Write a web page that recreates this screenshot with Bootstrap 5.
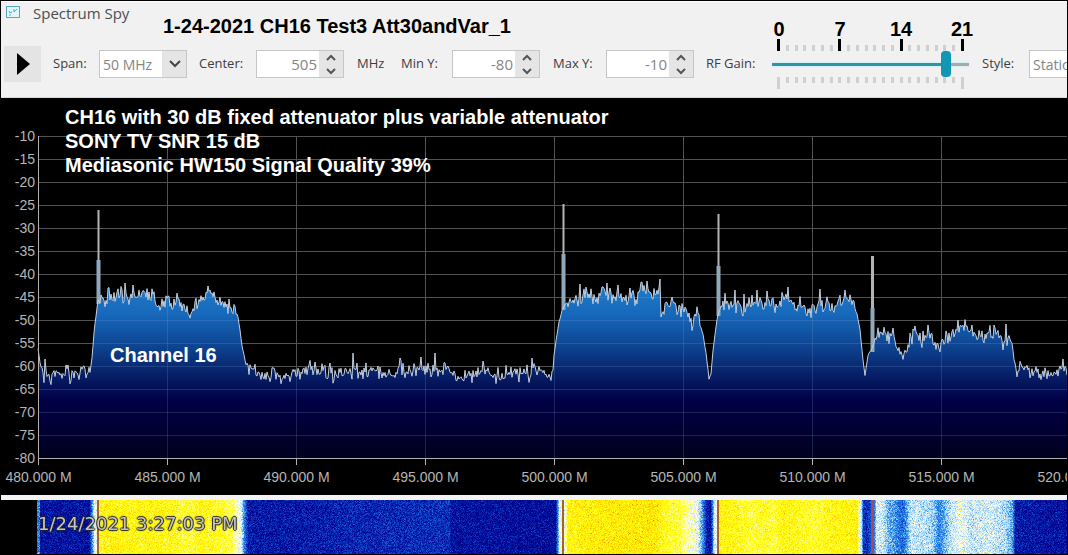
<!DOCTYPE html>
<html lang="en">
<head>
<meta charset="utf-8">
<meta name="viewport" content="width=device-width, initial-scale=1">
<title>Spectrum Spy</title>
<link href="https://cdn.jsdelivr.net/npm/bootstrap@5.3.0/dist/css/bootstrap.min.css" rel="stylesheet">
<style>
  body { font-family: "Open Sans", "Noto Sans", sans-serif; background: #000; }
  .spy-window { border: 1px solid #000; }
  .spy-head { background: #f1f1f1; border-top: 1px solid #fff; border-bottom: 1px solid #d5d9d9; color: #3c3c44; height: 97px; }
  .title-row { height: 36px; }
  .app-name { font-size: 15px; line-height: 22px; width: 130px; color: #4d4d52; }
  .note { font-family: "Liberation Sans", Arial, sans-serif; font-weight: 700; font-size: 20px; line-height: 24px; white-space: nowrap; }
  .note-dark { color: #000; }
  .heading { padding-top: 12px; }
  .tool-row { display: grid; grid-template-columns: 49px 46px 100px 57px 101px 44px 51px 101px 53px 100px 66px 210px 47px minmax(88px, 1fr); padding-left: 3px; height: 52px; align-items: center; font-size: 13px; white-space: nowrap; }
  .play { width: 37px; height: 36px; background: #e4e4e4; border: 0; }
  .field { width: 88px; height: 28px; border: 1px solid #c6c6c6; background: #fff; }
  .field input, .field select { appearance: none; border: 0; outline: 0; background: transparent; color: #858585; font-size: 15px; min-width: 0; padding: 0; }
  .field input { text-align: right; padding-right: 2px; }
  .field select { font-size: 14px; padding-left: 3px; }
  .field input::-webkit-inner-spin-button { appearance: none; }
  .field-end { background: #e5e5e5; width: 24px; flex-shrink: 0; }
  .step-btn { border: 0; background: transparent; height: 13px; }
  .gain { width: 197px; }
  .gain input { appearance: none; display: block; width: 100%; height: 26px; margin: 0; background: transparent; }
  .gain input::-webkit-slider-runnable-track { height: 3px; background: linear-gradient(90deg, #2f93aa 88%, #a9a9a9 88%); box-shadow: 0 0 3px #aeeefa; }
  .gain input::-webkit-slider-thumb { appearance: none; width: 10px; height: 26px; margin-top: -12px; border-radius: 4px; background: #1296b4; }
  .ticks { padding: 0 5px; height: 12px; }
  .ticks i { width: 3px; height: 6px; background: #cfcfcf; }
  .ticks .long { height: 12px; }
  .ticks .ink { height: 12px; background: #000; }
  .scale { bottom: 100%; left: 0; right: 0; height: 22px; }
  .scale span { width: 24px; text-align: center; }
  .scale-box { margin: 0 -5px; }
  .chart { height: 397px; }
  .chart svg { font-family: "Liberation Sans", Arial, sans-serif; font-size: 14px; }
  .chart-notes { left: 64px; top: 7px; }
  .channel-note { left: 109px; top: 245px; }
  .divider { height: 5px; background: #f3f3f3; }
  .fall { padding-left: 36px; min-height: 53px; }
  .stamp { left: 37px; top: 12px; font: 18px/24px "DejaVu Sans", Verdana, sans-serif; color: #c4c4c4; white-space: nowrap; text-shadow: 1px 0 1px #222, -1px 0 1px #222, 0 1px 1px #222, 0 -1px 1px #222; }
</style>
</head>
<body>
<div class="spy-window d-flex flex-column vh-100 overflow-hidden">
  <header class="spy-head flex-shrink-0 overflow-hidden">
    <div class="title-row d-flex">
      <svg class="ms-1 mt-1 me-2" width="20" height="14" viewBox="0 0 20 14" fill="none" stroke="#52aac7"><rect x="1.500" y=".5" width="13" height="11" fill="#dff6fc"/><path d="M4 5l1 2 2-1M9 3v3l3-3M4 9h2"/></svg>
      <span class="app-name">Spectrum Spy</span>
      <h1 class="note note-dark heading mb-0">1-24-2021 CH16 Test3 Att30andVar_1</h1>
    </div>
    <form class="tool-row">
      <button type="button" class="play p-0" aria-label="Start"><svg width="37" height="36" viewBox="0 0 37 36"><path d="M13 7l13 11-13 11z"/></svg></button>
      <label for="span">Span:</label>
      <div class="field d-flex"><select id="span" class="flex-fill"><option>50 MHz</option></select><span class="field-end d-flex align-items-center justify-content-center border-start"><svg width="14" height="10" fill="none" stroke="#444" stroke-width="2"><path d="M2 2l5 5 5-5"/></svg></span></div>
      <label for="center">Center:</label>
      <div class="field d-flex"><input id="center" type="number" class="flex-fill" value="505"><div class="field-end d-flex flex-column"><button type="button" class="step-btn p-0" aria-label="Center up"><svg class="d-block m-auto" width="12" height="8" fill="none" stroke="#555" stroke-width="2"><path d="M2 6l4-4 4 4"/></svg></button><button type="button" class="step-btn p-0" aria-label="Center down"><svg class="d-block m-auto" width="12" height="8" fill="none" stroke="#555" stroke-width="2"><path d="M2 2l4 4 4-4"/></svg></button></div></div>
      <span>MHz</span>
      <label for="miny">Min Y:</label>
      <div class="field d-flex"><input id="miny" type="number" class="flex-fill" value="-80"><div class="field-end d-flex flex-column"><button type="button" class="step-btn p-0" aria-label="Min up"><svg class="d-block m-auto" width="12" height="8" fill="none" stroke="#555" stroke-width="2"><path d="M2 6l4-4 4 4"/></svg></button><button type="button" class="step-btn p-0" aria-label="Min down"><svg class="d-block m-auto" width="12" height="8" fill="none" stroke="#555" stroke-width="2"><path d="M2 2l4 4 4-4"/></svg></button></div></div>
      <label for="maxy">Max Y:</label>
      <div class="field d-flex"><input id="maxy" type="number" class="flex-fill" value="-10"><div class="field-end d-flex flex-column"><button type="button" class="step-btn p-0" aria-label="Max up"><svg class="d-block m-auto" width="12" height="8" fill="none" stroke="#555" stroke-width="2"><path d="M2 6l4-4 4 4"/></svg></button><button type="button" class="step-btn p-0" aria-label="Max down"><svg class="d-block m-auto" width="12" height="8" fill="none" stroke="#555" stroke-width="2"><path d="M2 2l4 4 4-4"/></svg></button></div></div>
      <label for="gain">RF Gain:</label>
      <div class="gain position-relative">
        <div class="scale position-absolute"><div class="scale-box note note-dark d-flex justify-content-between"><span>0</span><span>7</span><span>14</span><span>21</span></div></div>
        <div class="ticks d-flex justify-content-between align-items-end" id="ticksTop"></div>
        <input id="gain" type="range" min="0" max="21" value="19">
        <div class="ticks d-flex justify-content-between" id="ticksBottom"></div>
      </div>
      <label for="style">Style:</label>
      <div class="field d-flex"><select id="style" class="flex-fill"><option>Static</option></select></div>
    </form>
  </header>

  <main class="chart position-relative flex-shrink-0">
    <svg id="plot" class="d-block w-100 h-100"></svg>
    <div class="note chart-notes position-absolute text-white">CH16 with 30 dB fixed attenuator plus variable attenuator<br>SONY TV SNR 15 dB<br>Mediasonic HW150 Signal Quality 39%</div>
    <div class="note channel-note position-absolute text-white">Channel 16</div>
  </main>
  <div class="divider flex-shrink-0"></div>
  <section class="fall position-relative flex-grow-1 d-flex">
    <canvas id="fall" class="w-100"></canvas>
    <div class="stamp position-absolute">1/24/2021 3:27:03 PM</div>
  </section>
</div>
<script src="https://cdn.jsdelivr.net/npm/bootstrap@5.3.0/dist/js/bootstrap.bundle.min.js"></script>
<script>
  for (let i = 0; i < 22; i++) {
    ticksTop.insertAdjacentHTML('beforeend', `<i class="${i % 7 ? '' : 'ink'}"></i>`);
    ticksBottom.insertAdjacentHTML('beforeend', `<i class="${i % 21 ? '' : 'long'}"></i>`);
  }

  let seed = 7;
  const rnd = () => (seed = (seed * 16807) % 2147483647) / 2147483647;
  const lerp = (pts, x) => {
    let i = 1;
    while (i < pts.length - 1 && pts[i][0] < x) i++;
    const [a, b] = [pts[i - 1], pts[i]];
    return a[1] + (b[1] - a[1]) * Math.max(0, Math.min(1, (x - a[0]) / (b[0] - a[0])));
  };
  const pairs = s => s.trim().split(/\s+/).map(p => p.split(',').map(Number));

  // Signal level along the sweep; steep edges carry little noise.
  const level = pairs(`38,351 40,360 42,368 44,378 46,364 49,380 52,379 54,372 57,375 60,370 63,376 68,369 72,380 75,372 79,375 82,369 86,368 90,372
    91,365 92,358 94,332 96,316 98,300 101,300 107,298 112,298 125,295 140,294 154,295 156,304 167,302 177,303 185,308 190,311 200,299 208,296 218,299 226,304 235,310 238,318
    240,330 242,345 244,356 246,365 252,368 258,372 263,378 275,374 288,375 301,375 312,368 328,373 340,375 352,370 362,373 370,367 382,375 400,370 420,370 440,369 450,369 456,376 468,377 482,371 500,375 520,375 535,370 548,375 553,370
    554,355 557,335 559,322 562,311 566,302 575,298 580,302 583,294 590,291 598,299 602,290 610,293 620,297 625,301 630,294 635,300 642,288 650,292 659,292 661,312 665,306 672,304 680,310 687,309 692,323 697,315 700,325
    703,335 706,353 708,370 709,378 711,375 713,350 717,320 719,311 725,301 735,303 745,310 753,302 763,307 768,301 775,308 784,298 789,298 795,310 800,303 807,309 815,306 820,304 827,303 835,307 838,298 850,299 853,304
    857,314 860,330 863,360 865,376 868,355 871,350 874,344 878,334 890,338 897,344 903,358 905,354 909,340 915,332 920,337 928,335 935,344 940,345 950,337 958,328 965,325 975,336 985,338 990,333 995,331 1002,344 1006,336 1012,343
    1014,360 1018,373 1022,368 1030,370 1040,374 1050,373 1058,377 1063,368 1067,373`);
  const peaks = { 45: 359, 68: 365, 125: 283, 133: 285, 208: 286, 229: 299, 315: 362, 353: 353, 400: 358, 421: 357, 435: 353, 483: 361, 532: 358, 580: 284, 602: 287, 607: 283, 618: 285, 630: 288, 642: 282, 647: 281, 660: 279, 672: 297, 735: 290, 744: 294, 757: 290, 767: 291, 788: 287, 820: 289, 845: 290, 893: 328, 915: 326, 928: 325, 958: 320, 994: 325, 1006: 324, 1063: 359 };
  const edges = [[90, 98], [238, 246], [552, 565], [700, 720], [855, 874], [1011, 1015]];
  const trace = [];
  for (let x = 38; x <= 1067; x++) {
    const steep = edges.some(e => x >= e[0] && x <= e[1]);
    const n = rnd() + rnd() + rnd() - 1.5;
    trace.push([x - 38, (peaks[x] || lerp(level, x) + n * (steep ? 1 : 8)) - 98]);
  }
  // Narrow carriers: position, tip, start of the wide foot, end of the foot.
  const carriers = [[98, 210, 260, 304], [563, 204, 254, 310], [718, 214, 266, 316], [872, 256, 308, 352]];

  function drawPlot() {
    const w = plot.clientWidth, x0 = 37, k = (w - x0) / 1029;
    const X = v => x0 + v * k;
    let grid = '', text = '', axis = '';
    for (let i = 0; i <= 14; i++) {
      const y = 38 + i * 23;
      if (i < 14) grid += `M${x0} ${y + .5}H${w}`;
      text += `<text x="34" y="${y + 5}" text-anchor="end">${-10 - 5 * i}</text>`;
    }
    for (let i = 0; i <= 8; i++) {
      const x = Math.round(X(i * 129)) + .5;
      if (i) grid += `M${x} 38V360`;
      axis += `M${x} 360V367`;
      text += `<text x="${x}" y="384" text-anchor="middle">${480 + 5 * i}.000 M</text>`;
    }
    const line = trace.map(p => X(p[0]).toFixed(1) + ' ' + p[1].toFixed(1)).join('L');
    const spikes = carriers.map(([x, a, b, c]) => {
      const px = Math.round(X(x - 38)) + 0.5;
      return `<path d="M${px} ${a - 98}V${c - 98}" stroke="#b4b4b4" stroke-width="${x === 872 ? 3 : 2}"/><path d="M${px} ${b - 98}V${c - 98}" stroke="#91a8ba" stroke-width="4"/>`;
    }).join('');
    plot.innerHTML = `<defs><linearGradient id="sea" gradientUnits="userSpaceOnUse" x1="0" y1="180" x2="0" y2="360">
      <stop offset="0" stop-color="#2380ca"/><stop offset=".2" stop-color="#1768bb"/><stop offset=".35" stop-color="#0f4a98"/><stop offset=".5" stop-color="#082870"/><stop offset=".68" stop-color="#020046"/><stop offset="1" stop-color="#00001e"/></linearGradient></defs>
      <path d="${grid}" stroke="#525252"/>
      <path d="M${x0} 360L${line}V360Z" fill="url(#sea)"/>
      <clipPath id="under"><path d="M${x0} 360L${line}V360Z"/></clipPath>
      <path d="${grid}" stroke="#8aa8e0" stroke-opacity=".2" clip-path="url(#under)"/>
      ${spikes}
      <path d="M${line}" fill="none" stroke="#c3cfdd"/>
      <path d="M${x0 + .5} 38V367M${x0} 360.5H${w}${axis}" stroke="#b0b0b0"/>
      <g fill="#b5b5b5">${text}</g>`;
  }

  const heat = pairs(`37,.35 39,.35 40,.1 89,.1 91,.3 94,.62 98,.64 99,.81 103,.83 175,.82 182,.79 190,.79 200,.82 220,.8 232,.76 238,.65 241,.6 244,.35 248,.12 300,.12 350,.15 449,.17 451,.1 555,.08 557,.3 559,.62 565,.64 567,.82 590,.85 655,.86 663,.81 680,.77 690,.68 697,.62 702,.4 706,.15 710,.08 712,.3 714,.6 718,.65 719,.83
    740,.81 750,.78 765,.8 772,.78 785,.83 800,.8 815,.79 830,.82 857,.83 859,.64 861,.55 863,.2 866,.16 870,.25 874,.35 876,.58 882,.58 888,.44 895,.38 902,.3 906,.4 911,.57 925,.54 933,.5 938,.35 942,.4 950,.55 960,.63 970,.55 990,.58 1005,.52 1012,.42 1015,.12 1067,.09`);
  const map = [[0, 0, 0, 130], [.1, 4, 16, 158], [.22, 14, 66, 200], [.38, 45, 140, 235], [.5, 160, 212, 245], [.64, 250, 252, 250], [.75, 255, 255, 110], [.8, 255, 252, 20], [.86, 255, 238, 0], [.93, 250, 190, 0], [1, 220, 60, 0]];
  const shades = [1, 2, 3].map(c => map.map(m => [m[0], m[c]]));

  function drawFall() {
    const c = fall, w = c.width = c.clientWidth, h = c.height = c.clientHeight;
    const g = c.getContext('2d'), img = g.createImageData(w, h);
    for (let x = 0; x < w; x++) {
      const px = 37 + x * 1030 / w, base = lerp(heat, px), spread = base > .7 ? .08 : .12;
      for (let y = 0; y < h; y++) {
        const v = Math.max(0, Math.min(1, base + (rnd() + rnd() + rnd() - 1.5) * spread));
        const o = (y * w + x) * 4;
        for (let i = 0; i < 3; i++) img.data[o + i] = lerp(shades[i], v);
        img.data[o + 3] = 255;
      }
    }
    g.putImageData(img, 0, 0);
    for (const [x, col, t] of [[97, '#a8622c', 2], [562, '#a8622c', 2], [717, '#a8622c', 2], [871, '#a34a5c', 3]]) {
      g.fillStyle = col;
      g.fillRect(Math.round((x - 37) * w / 1030), 0, t, h);
    }
  }
  const draw = () => { drawPlot(); drawFall(); };
  addEventListener('resize', draw);
  draw();
</script>
</body>
</html>
